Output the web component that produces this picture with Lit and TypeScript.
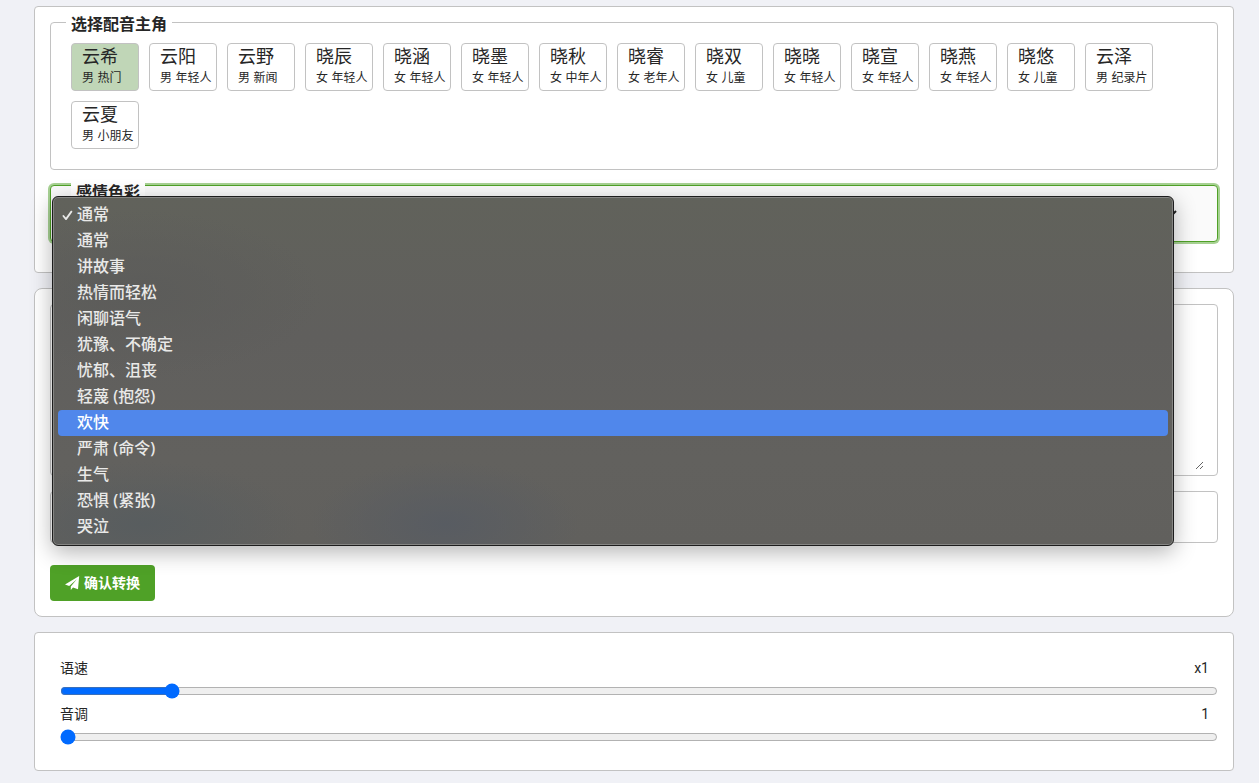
import { LitElement, html, css } from "lit";
import { customElement, property, state } from "lit/decorators.js";
import { classMap } from "lit/directives/class-map.js";

interface Voice {
  name: string;
  desc: string;
}

const VOICES: Voice[] = [
  { name: "云希", desc: "男 热门" },
  { name: "云阳", desc: "男 年轻人" },
  { name: "云野", desc: "男 新闻" },
  { name: "晓辰", desc: "女 年轻人" },
  { name: "晓涵", desc: "女 年轻人" },
  { name: "晓墨", desc: "女 年轻人" },
  { name: "晓秋", desc: "女 中年人" },
  { name: "晓睿", desc: "女 老年人" },
  { name: "晓双", desc: "女 儿童" },
  { name: "晓晓", desc: "女 年轻人" },
  { name: "晓宣", desc: "女 年轻人" },
  { name: "晓燕", desc: "女 年轻人" },
  { name: "晓悠", desc: "女 儿童" },
  { name: "云泽", desc: "男 纪录片" },
  { name: "云夏", desc: "男 小朋友" },
];

const MOODS = [
  "通常",
  "通常",
  "讲故事",
  "热情而轻松",
  "闲聊语气",
  "犹豫、不确定",
  "忧郁、沮丧",
  "轻蔑 (抱怨)",
  "欢快",
  "严肃 (命令)",
  "生气",
  "恐惧 (紧张)",
  "哭泣",
];

@customElement("mood-menu")
export class MoodMenu extends LitElement {
  @property({ type: Array }) items: string[] = [];
  @property({ type: Number }) selected = 0;
  @property({ type: Number }) active = 0;

  static styles = css`
    :host {
      display: block;
      box-sizing: border-box;
      padding: 5px;
      border: 1px solid #1d1d1d;
      border-radius: 6px;
      background:
        radial-gradient(ellipse 14% 18% at 8% 94%, #585d5f, transparent),
        radial-gradient(ellipse 12% 18% at 35% 94%, #585c62, transparent),
        radial-gradient(ellipse 16% 24% at 8% 28%, #5c5c5a, transparent),
        linear-gradient(#61625b, #605f5d 40%, #62615e 75%, #61605d);
      box-shadow: inset 0 0 0 1px #858583, 0 6px 22px rgba(0, 0, 0, 0.3);
      color: #e9e9e8;
      font-family: "Noto Sans", "Noto Sans CJK SC", sans-serif;
      font-size: 16px;
      font-weight: 500;
    }
    .list {
      list-style: none;
      margin: 0;
      padding: 0;
    }
    .item {
      display: flex;
      align-items: center;
      gap: 4px;
      height: 26px;
      padding-left: 4px;
      border-radius: 4px;
      line-height: 24px;
    }
    .item span {
      padding-bottom: 2px;
    }
    .active {
      background: #5087eb;
      color: #fff;
    }
    .tick {
      width: 11px;
      height: 12px;
      flex: none;
      visibility: hidden;
    }
    .selected .tick {
      visibility: visible;
    }
  `;

  render() {
    return html`<ul class="list" role="listbox" aria-label="感情色彩">
      ${this.items.map(
        (text, i) => html`<li
          role="option"
          aria-selected=${i === this.selected}
          class=${classMap({
            item: true,
            selected: i === this.selected,
            active: i === this.active,
          })}
          @mouseenter=${() => (this.active = i)}
        >
          <svg class="tick" viewBox="0 0 11 12" aria-hidden="true">
            <path d="M1.4 7 4 10.1 9.4 2.6" fill="none" stroke="currentColor" stroke-width="1.8" stroke-linecap="round" stroke-linejoin="round" />
          </svg>
          <span>${text}</span>
        </li>`
      )}
    </ul>`;
  }
}

@customElement("app-root")
export class AppRoot extends LitElement {
  @state() private voice = 0;

  static styles = css`
    :host {
      display: block;
      box-sizing: border-box;
      min-height: 100vh;
      padding: 6px 25px 12px 34px;
      background: #f0f1f6;
      color: #262626;
      font-family: "Noto Sans", "Noto Sans CJK SC", sans-serif;
      font-size: 14px;
      line-height: 24px;
    }
    * {
      box-sizing: border-box;
    }
    button,
    input,
    select,
    textarea {
      font: inherit;
      color: inherit;
    }
    .page {
      display: flex;
      flex-direction: column;
      gap: 15px;
    }
    .card {
      border: 1px solid #c2c2c2;
      border-radius: 4px;
      background: #fff;
      padding: 15px;
    }
    .voices-card {
      padding-top: 2px;
      padding-bottom: 30px;
    }
    .voices {
      margin: 0 0 15px;
      padding: 8px 20px 20px;
      border: 1px solid #c2c2c2;
      border-radius: 4px;
      min-width: 0;
    }
    .title {
      margin-left: -5px;
      padding: 4px 5px 0;
      font-size: 16px;
      font-weight: 700;
      line-height: 22px;
    }
    .chips {
      display: flex;
      flex-wrap: wrap;
      gap: 10px;
    }
    .chip {
      display: flex;
      flex-direction: column;
      width: 68px;
      height: 48px;
      padding: 1px 0 0 10px;
      border: 1px solid #c2c2c2;
      border-radius: 4px;
      background: #fff;
      text-align: left;
      white-space: nowrap;
    }
    .chip.on {
      background: #c0d6b7;
    }
    .name {
      font-size: 18px;
      line-height: 22px;
    }
    .desc {
      font-family: Inter, "Noto Sans CJK SC", sans-serif;
      font-size: 12px;
      line-height: 22px;
    }
    .mood {
      position: relative;
    }
    .mood-label {
      position: absolute;
      top: -5px;
      left: 21px;
      padding: 0 5px;
      background: #fff;
      font-size: 16px;
      font-weight: 700;
      line-height: 24px;
    }
    .mood-select {
      display: block;
      width: 100%;
      height: 57px;
      padding: 0 52px 0 20px;
      border: 1px solid #4fa127;
      border-radius: 4px;
      outline: none;
      appearance: none;
      background: #fafafa
        url("data:image/svg+xml,%3Csvg xmlns='http://www.w3.org/2000/svg' viewBox='0 0 12 8'%3E%3Cpath d='M1 1l5 5 5-5' fill='none' stroke='%23222' stroke-width='2'/%3E%3C/svg%3E")
        no-repeat right 40px center / 12px 8px;
      box-shadow: 0 0 0 2px #a7d193;
    }
    .menu {
      position: absolute;
      top: 11px;
      left: 2px;
      right: 44px;
      z-index: 2;
    }
    .text-card {
      border-radius: 8px;
      display: flex;
      flex-direction: column;
      align-items: stretch;
      gap: 15px;
    }
    .box {
      display: flex;
      border: 1px solid #c2c2c2;
      border-radius: 4px;
      padding: 5px 13px;
    }
    .words {
      width: 100%;
      height: 160px;
      border: 0;
      padding: 8px 0;
      outline: none;
      background: transparent;
      resize: vertical;
    }
    .line {
      width: 100%;
      height: 40px;
      border: 0;
      padding: 0;
      outline: none;
      background: transparent;
    }
    .submit {
      align-self: flex-start;
      display: flex;
      align-items: center;
      gap: 4px;
      height: 36px;
      margin-top: 7px;
      padding: 0 15px;
      border: 0;
      border-radius: 4px;
      background: #4fa127;
      color: #fff;
      font-weight: 700;
    }
    .plane {
      width: 15px;
      height: 14px;
      fill: #fff;
    }
    .sliders {
      padding: 23px 15px 22px 25px;
    }
    .row {
      display: flex;
      justify-content: space-between;
      padding-right: 9px;
    }
    .value {
      font-family: Roboto, "Noto Sans CJK SC", sans-serif;
    }
    .range {
      display: block;
      width: 100%;
      height: 16px;
      margin: 3px 0;
      accent-color: #006aff;
    }
  `;

  render() {
    return html`<main class="page">
      <section class="card voices-card">
        <fieldset class="voices">
          <legend class="title">选择配音主角</legend>
          <div class="chips">
            ${VOICES.map(
              (v, i) => html`<button
                type="button"
                class=${classMap({ chip: true, on: i === this.voice })}
                aria-pressed=${i === this.voice}
                @click=${() => (this.voice = i)}
              >
                <span class="name">${v.name}</span>
                <span class="desc">${v.desc}</span>
              </button>`
            )}
          </div>
        </fieldset>
        <div class="mood">
          <select class="mood-select" id="mood">
            ${MOODS.map((m) => html`<option>${m}</option>`)}
          </select>
          <label class="mood-label" for="mood">感情色彩</label>
          <mood-menu class="menu" .items=${MOODS} .selected=${0} .active=${8}></mood-menu>
        </div>
      </section>

      <section class="card text-card">
        <div class="box"><textarea class="words" aria-label="文本"></textarea></div>
        <div class="box"><input class="line" type="text" aria-label="名称" /></div>
        <button class="submit" type="button">
          <svg class="plane" viewBox="0 0 15 14" aria-hidden="true">
            <path d="M14.2 0 0 8.6 4.2 10 11.8 3.2 5.8 10.6V14L8 11.4 13 13.2Z" />
          </svg>
          确认转换
        </button>
      </section>

      <section class="card sliders">
        <div class="row"><label for="speed">语速</label><output class="value" for="speed">x1</output></div>
        <input class="range" id="speed" type="range" min="0" max="1000" value="91" />
        <div class="row"><label for="pitch">音调</label><output class="value" for="pitch">1</output></div>
        <input class="range" id="pitch" type="range" min="0" max="1000" value="0" />
      </section>
    </main>`;
  }
}
